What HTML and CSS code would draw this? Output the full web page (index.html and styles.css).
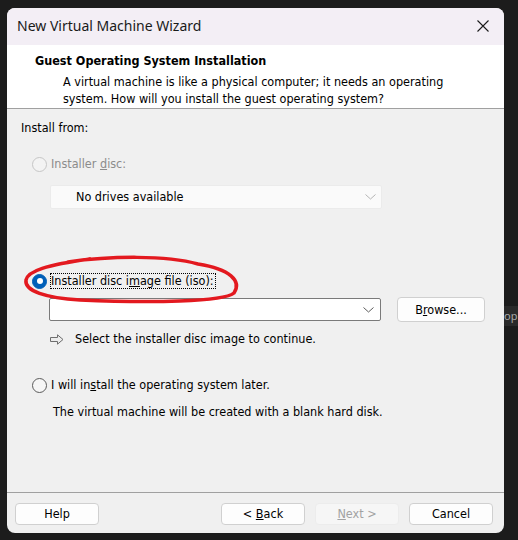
FILE: index.html
```html
<!DOCTYPE html>
<html>
<head>
<meta charset="utf-8">
<link rel="stylesheet" href="styles.css">
</head>
<body>
<div class="bg-app">op</div>
<div class="window">
  <div class="titlebar">
    <span class="title">New Virtual Machine Wizard</span>
    <svg class="close" width="12" height="12" viewBox="0 0 12 12"><path d="M0.5 0.5 L11.5 11.5 M11.5 0.5 L0.5 11.5" stroke="#1b1b1b" stroke-width="1.1" fill="none"/></svg>
  </div>
  <div class="header">
    <div class="h-title">Guest Operating System Installation</div>
    <div class="h-desc">A virtual machine is like a physical computer; it needs an operating<br>system. How will you install the guest operating system?</div>
  </div>
  <div class="content">
    <div class="line">Install from:</div>
    <div class="radio-row disabled r1">
      <span class="radio"></span>
      <span class="lbl">Installer <u>d</u>isc:</span>
    </div>
    <div class="combo combo-disabled">
      <span class="combo-text">No drives available</span>
      <svg class="chev" width="11" height="6" viewBox="0 0 11 6"><path d="M0.5 0.5 L5.5 5 L10.5 0.5" stroke="#b4b4b4" fill="none"/></svg>
    </div>
    <div class="radio-row r2">
      <span class="radio checked"></span>
      <span class="lbl focus">Installer disc i<u>m</u>age file (iso):</span>
    </div>
    <div class="iso-row">
      <div class="combo combo-iso">
        <svg class="chev" width="11" height="6" viewBox="0 0 11 6"><path d="M0.5 0.5 L5.5 5 L10.5 0.5" stroke="#5c5c5c" fill="none"/></svg>
      </div>
      <button class="btn browse">B<u>r</u>owse...</button>
    </div>
    <div class="hint-row">
      <svg class="arrow" width="14" height="11" viewBox="0 0 14 11"><path d="M0.5 3.5 H7.5 V0.8 L13 5.5 L7.5 10.2 V7.5 H0.5 Z" fill="#ececec" stroke="#6e6e6e"/></svg>
      <span>Select the installer disc image to continue.</span>
    </div>
    <div class="radio-row r3">
      <span class="radio"></span>
      <span class="lbl">I will in<u>s</u>tall the operating system later.</span>
    </div>
    <div class="note">The virtual machine will be created with a blank hard disk.</div>
  </div>
  <div class="footer">
    <button class="btn">Help</button>
    <div class="spacer"></div>
    <button class="btn">&lt; <u>B</u>ack</button>
    <button class="btn btn-disabled"><u>N</u>ext &gt;</button>
    <button class="btn">Cancel</button>
  </div>
  <svg class="annot" width="240" height="60" viewBox="0 0 240 60"><path d="M58 9 C100 3, 156 2, 188 11 C220 16, 232 28, 224 40 C214 49, 140 50, 70 47 C36 45, 14 38, 16 27 C18 18, 36 12, 80 6" fill="none" stroke="#e3191f" stroke-width="3.5" stroke-linecap="round"/></svg>
</div>
</body>
</html>
```

FILE: styles.css
```css
html, body {
  margin: 0;
  padding: 0;
}
body {
  width: 518px;
  height: 540px;
  background: #1c1c1c;
  overflow: hidden;
  position: relative;
  font-family: "DejaVu Sans", sans-serif;
  font-stretch: condensed;
  font-size: 12.5px;
  line-height: 16px;
  color: #000;
}
.bg-app {
  position: absolute;
  left: 504px;
  top: 306px;
  width: 14px;
  height: 20px;
  background: #2a2a2a;
  color: #a8a8a8;
  font-family: "Noto Sans", sans-serif;
  font-stretch: normal;
  font-size: 11px;
  line-height: 20px;
}
.window {
  position: absolute;
  left: 7px;
  top: 8px;
  width: 497px;
  height: 525px;
  border-radius: 8px;
  overflow: hidden;
  background: #f0f0f0;
  display: flex;
  flex-direction: column;
}
.titlebar {
  height: 37px;
  flex: none;
  background: #f3eef5;
  display: flex;
  align-items: center;
  padding: 0 15px 0 10px;
}
.title {
  font-family: "Noto Sans", sans-serif;
  font-stretch: normal;
  font-size: 14px;
  color: #1a1a1a;
  flex: 1;
  margin-top: -1px;
}
.close {
  margin-top: -2px;
}
.header {
  flex: none;
  background: #ffffff;
  border-bottom: 1px solid #a0a0a0;
  padding: 8px 0 0 28px;
  box-sizing: border-box;
  height: 64px;
}
.h-title {
  font-weight: bold;
}
.h-desc {
  margin-top: 5px;
  padding-left: 28px;
  line-height: 16.5px;
}
.content {
  flex: 1;
  padding: 11px 0 0 14px;
}
.radio-row {
  display: flex;
  align-items: center;
  margin-left: 11px;
}
.r1 { margin-top: 20px; }
.r2 { margin-top: 64px; }
.r3 { margin-top: 30px; }
.radio {
  width: 13px;
  height: 13px;
  border: 1px solid #5b5b5b;
  border-radius: 50%;
  background: #f6f6f6;
  margin-right: 4px;
  position: relative;
  flex: none;
}
.disabled .radio {
  border-color: #c6c6c6;
  background: #f3f3f3;
}
.disabled .lbl {
  color: #8c8c8c;
}
.radio.checked {
  background: #005fb8;
  border-color: #005fb8;
}
.radio.checked::after {
  content: "";
  position: absolute;
  left: 3.5px;
  top: 3.5px;
  width: 6px;
  height: 6px;
  border-radius: 50%;
  background: #fff;
}
.lbl {
  display: inline-block;
  line-height: 16px;
}
.focus {
  outline: 1px dotted #000;
  outline-offset: -1px;
  padding: 0 2px 0 1px;
  margin-left: -1px;
}
.combo {
  box-sizing: border-box;
  display: flex;
  align-items: center;
  width: 332px;
}
.combo-disabled {
  margin: 13px 0 0 29px;
  height: 24px;
  background: #fafafa;
  border: 1px solid #ebebeb;
  border-radius: 2px;
}
.combo-text {
  flex: 1;
  padding-left: 25px;
}
.chev {
  margin-right: 5px;
}
.iso-row {
  display: flex;
  align-items: center;
  margin: 8px 0 0 28px;
}
.combo-iso {
  height: 23px;
  background: #fff;
  border: 1px solid #7a7a7a;
  border-radius: 2px;
  justify-content: flex-end;
}
.combo-iso .chev {
  margin-right: 6px;
}
.btn {
  font: inherit;
  color: #000;
  box-sizing: border-box;
  background: #fdfdfd;
  border: 1px solid #d0d0d0;
  border-radius: 4px;
  padding: 0;
  width: 84px;
  height: 22px;
  line-height: 18px;
}
.browse {
  margin-left: 16px;
  width: 88px;
  height: 25px;
}
.hint-row {
  display: flex;
  align-items: center;
  margin: 9px 0 0 29px;
}
.arrow {
  margin-right: 11px;
}
.note {
  margin: 11px 0 0 32px;
}
.footer {
  flex: none;
  height: 41px;
  box-sizing: border-box;
  border-top: 1px solid #a0a0a0;
  padding: 10px 11px 0 8px;
  display: flex;
  align-items: flex-start;
  gap: 10px;
}
.spacer {
  flex: 1;
}
.btn-disabled {
  background: #f6f6f6;
  border-color: #ececec;
  color: #a2a2a2;
}
.annot {
  position: absolute;
  left: 3px;
  top: 245px;
}
```
